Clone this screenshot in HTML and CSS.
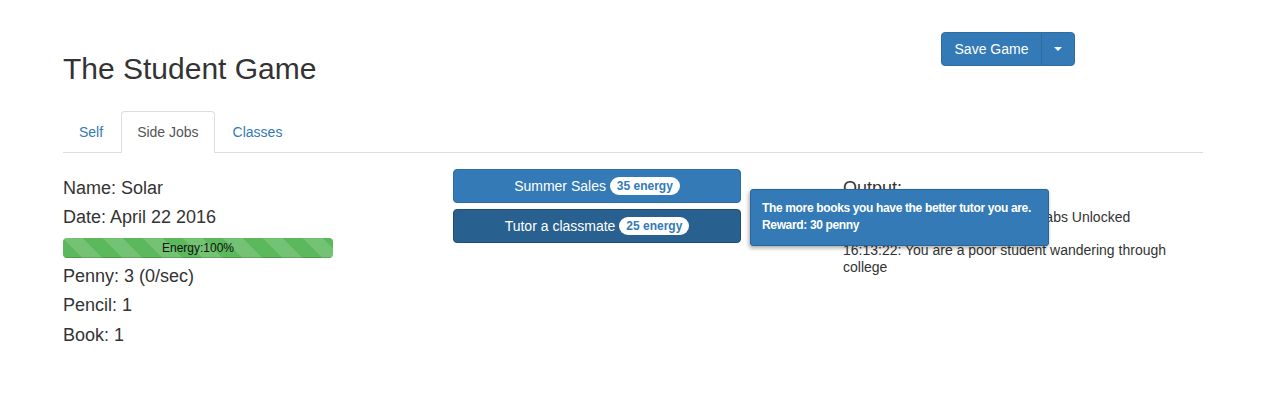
FILE: index.html
```html
<!DOCTYPE html>
<html lang="en">
<head>
<meta charset="utf-8">
<title>The Student Game</title>
<link rel="stylesheet" href="styles.css">
</head>
<body>
<div class="container">
  <header class="header">
    <h2 class="title">The Student Game</h2>
    <div class="btn-group">
      <button class="btn btn-primary save-btn">Save Game</button>
      <button class="btn btn-primary caret-btn"><span class="caret"></span></button>
    </div>
  </header>

  <ul class="nav-tabs">
    <li><a href="#">Self</a></li>
    <li class="active"><a href="#">Side Jobs</a></li>
    <li><a href="#">Classes</a></li>
  </ul>

  <div class="tab-content">
    <div class="col stats">
      <h4 class="stat">Name: Solar</h4>
      <h4 class="stat">Date: April 22 2016</h4>
      <div class="progress">
        <div class="progress-bar">Energy:100%</div>
      </div>
      <h4 class="stat">Penny: 3 (0/sec)</h4>
      <h4 class="stat">Pencil: 1</h4>
      <h4 class="stat">Book: 1</h4>
    </div>

    <div class="col jobs">
      <button class="btn btn-primary job-btn">Summer Sales <span class="badge">35 energy</span></button>
      <button class="btn btn-primary job-btn active">Tutor a classmate <span class="badge">25 energy</span></button>
    </div>

    <div class="col output">
      <h4 class="stat">Output:</h4>
      <p class="log">16:13:22: Side Jobs and Study Labs Unlocked</p>
      <p class="log">16:13:22: You are a poor student wandering through college</p>
    </div>

    <div class="tooltip">
      The more books you have the better tutor you are.<br>
      Reward: 30 penny
    </div>
  </div>
</div>
</body>
</html>
```

FILE: styles.css
```css
* {
  box-sizing: border-box;
}

html, body {
  margin: 0;
  padding: 0;
  background: #fff;
}

body {
  font-family: "Liberation Sans", Arial, Helvetica, sans-serif;
  font-size: 14px;
  line-height: 1.42857;
  color: #333;
}

.container {
  width: 1140px;
  margin-left: 63px;
}

/* Header */
.header {
  display: flex;
  align-items: flex-start;
}

.title {
  margin: 52px 0 0;
  font-size: 30px;
  font-weight: 500;
  line-height: 33px;
  color: #333;
}

.btn-group {
  display: flex;
  margin: 32px 128px 0 auto;
}

.btn {
  display: inline-block;
  font-family: inherit;
  font-size: 14px;
  line-height: 20px;
  padding: 6px 12px;
  border: 1px solid transparent;
  border-radius: 4px;
  cursor: pointer;
  text-align: center;
  white-space: nowrap;
}

.btn-primary {
  color: #fff;
  background-color: #337ab7;
  border-color: #2e6da4;
}

.btn-primary.active {
  background-color: #286090;
  border-color: #204d74;
}

.save-btn {
  border-top-right-radius: 0;
  border-bottom-right-radius: 0;
  width: 101px;
  padding: 6px 0;
}

.caret-btn {
  margin-left: -1px;
  width: 34px;
  border-top-left-radius: 0;
  border-bottom-left-radius: 0;
  display: flex;
  align-items: center;
  justify-content: center;
  height: 34px;
}

.caret {
  display: inline-block;
  width: 0;
  height: 0;
  border-top: 4px solid #fff;
  border-left: 4px solid transparent;
  border-right: 4px solid transparent;
}

/* Tabs */
.nav-tabs {
  list-style: none;
  margin: 26px 0 0;
  padding: 0;
  display: flex;
  border-bottom: 1px solid #ddd;
}

.nav-tabs li {
  margin-bottom: -1px;
  margin-right: 2px;
}

.nav-tabs a {
  display: block;
  padding: 10px 15px;
  line-height: 20px;
  border: 1px solid transparent;
  border-radius: 4px 4px 0 0;
  color: #337ab7;
  text-decoration: none;
}

.nav-tabs .active a {
  color: #555;
  background: #fff;
  border-color: #ddd #ddd transparent;
}

/* Content */
.tab-content {
  position: relative;
  display: grid;
  grid-template-columns: 360px 360px 360px;
  column-gap: 30px;
  align-items: start;
}

.stats {
  padding-top: 26px;
  display: flex;
  flex-direction: column;
  gap: 9.5px;
}

.stat {
  margin: 0;
  font-size: 18px;
  font-weight: 500;
  line-height: 19.8px;
  color: #333;
}

.progress {
  width: 270px;
  height: 20px;
  margin-bottom: 0;
  background: #f5f5f5;
  border-radius: 4px;
  overflow: hidden;
}

.progress-bar {
  width: 100%;
  height: 100%;
  background-color: #5cb85c;
  background-image: linear-gradient(45deg, rgba(255,255,255,.15) 25%, transparent 25%, transparent 50%, rgba(255,255,255,.15) 50%, rgba(255,255,255,.15) 75%, transparent 75%, transparent);
  background-size: 40px 40px;
  box-shadow: inset 0 -1px 0 rgba(0,0,0,.15);
  font-size: 12px;
  line-height: 20px;
  text-align: center;
  color: #111;
}

.jobs {
  padding-top: 16px;
  display: flex;
  flex-direction: column;
  gap: 6px;
}

.job-btn {
  display: block;
  width: 288px;
  height: 34px;
}

.badge {
  display: inline-block;
  min-width: 10px;
  padding: 3px 7px;
  font-size: 12px;
  font-weight: bold;
  line-height: 1;
  color: #337ab7;
  background-color: #fff;
  border-radius: 10px;
  vertical-align: middle;
  position: relative;
  top: -1px;
}

.output {
  padding-top: 26px;
}

.output .stat {
  margin-bottom: 10px;
}

.log {
  margin: 0 0 16px;
  font-size: 14px;
  line-height: 17px;
}

/* Tooltip overlay */
.tooltip {
  position: absolute;
  left: 687px;
  top: 36px;
  width: 299px;
  padding: 10px 11px 11px;
  background: #337ab7;
  border: 1px solid #2a6496;
  border-radius: 3px;
  color: #fff;
  font-size: 12px;
  font-weight: bold;
  line-height: 17px;
  letter-spacing: -0.35px;
  white-space: nowrap;
  box-shadow: -1px 2px 4px rgba(0,0,0,.35);
}
```
